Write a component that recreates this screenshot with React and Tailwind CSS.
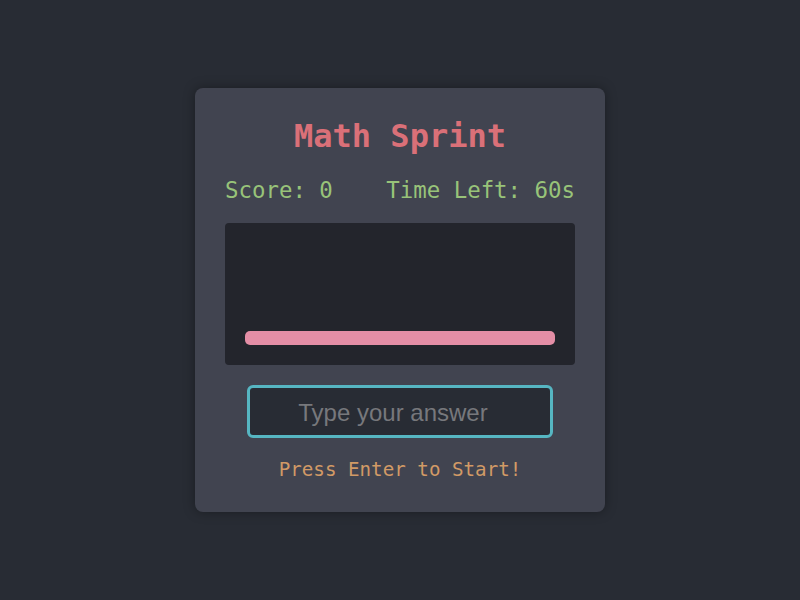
export default function App() {
  return (
    <div className="w-full h-[600px] bg-[#282c34] flex items-center justify-center" style={{ fontFamily: '"DejaVu Sans Mono", monospace' }}>
      <div className="w-[410px] bg-[#414450] rounded-lg px-[30px] pt-[28px] pb-[29px] flex flex-col items-center shadow-[0_0_12px_rgba(0,0,0,0.35)]">
        <h1 className="text-[32px] leading-[40px] font-bold text-[#da7078]">Math Sprint</h1>
        <div className="mt-[19px] w-full flex justify-between text-[22.4px] leading-[30px] text-[#98c379]">
          <span>Score: 0</span>
          <span>Time Left: 60s</span>
        </div>
        <div className="mt-[18px] w-full h-[142px] bg-[#23252c] rounded flex items-end p-5">
          <div className="w-full h-[14px] rounded-[5px] bg-[#e48ea6]"></div>
        </div>
        <input
          type="text"
          placeholder="Type your answer"
          className="mt-[20px] w-[306px] h-[53px] bg-[#282c34] border-[3px] border-[#56b6c2] rounded-md text-center text-[24px] pr-[14px] pt-[2px] text-gray-300 placeholder:text-[#77787c] outline-none"
          style={{ fontFamily: '"Liberation Sans", Arial, sans-serif' }}
        />
        <p className="mt-[19px] text-[19.2px] leading-[26px] text-[#d19a66]">Press Enter to Start!</p>
      </div>
    </div>
  );
}
